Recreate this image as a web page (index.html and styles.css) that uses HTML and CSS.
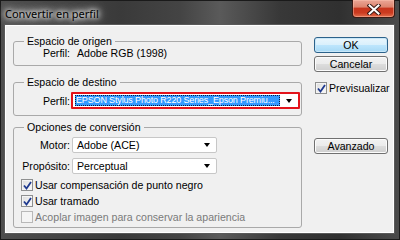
FILE: index.html
```html
<!DOCTYPE html>
<html lang="es">
<head>
<meta charset="utf-8">
<title>Convertir en perfil</title>
<link rel="stylesheet" href="styles.css">
</head>
<body>
<div class="window">
  <div class="titlebar">
    <span class="title">Convertir en perfil</span>
    <button class="close" aria-label="Cerrar">
      <svg width="14" height="11" viewBox="0 0 14 11">
        <path d="M2.5 1.5 L11.5 9.5 M11.5 1.5 L2.5 9.5" stroke="#3a1a14" stroke-width="4" stroke-linecap="square" fill="none"/>
        <path d="M2.5 1.5 L11.5 9.5 M11.5 1.5 L2.5 9.5" stroke="#ffffff" stroke-width="2" stroke-linecap="square" fill="none"/>
      </svg>
    </button>
  </div>
  <div class="client">
    <div class="groups">
      <fieldset class="group g1">
        <legend>Espacio de origen</legend>
        <div class="row">
          <span class="lbl">Perfil:</span>
          <span class="val">Adobe RGB (1998)</span>
        </div>
      </fieldset>
      <fieldset class="group g2">
        <legend>Espacio de destino</legend>
        <div class="row">
          <span class="lbl">Perfil:</span>
          <div class="select focused">
            <span class="sel-text">EPSON Stylus Photo R220 Series_Epson Premiu...</span>
            <span class="arrow"></span>
          </div>
        </div>
      </fieldset>
      <fieldset class="group g3">
        <legend>Opciones de conversión</legend>
        <div class="row">
          <span class="lbl">Motor:</span>
          <div class="select small"><span class="opt">Adobe (ACE)</span><span class="arrow"></span></div>
        </div>
        <div class="row r2">
          <span class="lbl">Propósito:</span>
          <div class="select small"><span class="opt">Perceptual</span><span class="arrow"></span></div>
        </div>
        <label class="check first"><span class="box on"><svg width="9" height="9" viewBox="0 0 9 9"><path d="M1 4.5 L3.5 7.5 L8 1" stroke="#1f3a8f" stroke-width="1.8" fill="none"/></svg></span>Usar compensación de punto negro</label>
        <label class="check"><span class="box on"><svg width="9" height="9" viewBox="0 0 9 9"><path d="M1 4.5 L3.5 7.5 L8 1" stroke="#1f3a8f" stroke-width="1.8" fill="none"/></svg></span>Usar tramado</label>
        <label class="check disabled"><span class="box"></span>Acoplar imagen para conservar la apariencia</label>
      </fieldset>
    </div>
    <div class="side">
      <button class="btn default">OK</button>
      <button class="btn cancel">Cancelar</button>
      <label class="check preview"><span class="box on"><svg width="9" height="9" viewBox="0 0 9 9"><path d="M1 4.5 L3.5 7.5 L8 1" stroke="#1f3a8f" stroke-width="1.8" fill="none"/></svg></span>Previsualizar</label>
      <button class="btn advanced">Avanzado</button>
    </div>
  </div>
</div>
</body>
</html>
```
FILE: styles.css
```css
* { box-sizing: border-box; }
html, body { margin: 0; padding: 0; }
body {
  width: 400px;
  height: 240px;
  overflow: hidden;
  background: #2e2e2e;
  font-family: "Liberation Sans", Arial, sans-serif;
  font-size: 10.6px;
  line-height: 12px;
  color: #000;
}
.window {
  width: 400px;
  height: 240px;
  display: flex;
  flex-direction: column;
  border: 1px solid #1a1a1a;
  background: linear-gradient(to right, #4e4e4e 0%, #3a3a3a 30%, #444 45%, #5a5a5a 55%, #383838 70%, #303030 85%, #4a4a4a 100%);
}
.titlebar {
  height: 23px;
  flex: none;
  display: flex;
  align-items: flex-start;
  justify-content: space-between;
}
.title {
  font-family: "Noto Sans", "Open Sans", sans-serif;
  font-size: 11px;
  line-height: 14px;
  margin: 6px 0 0 2px;
  padding: 0 2px;
  color: #000;
  text-shadow: 0 0 4px #fff, 0 0 7px #fff, 0 0 10px rgba(255,255,255,0.9), 0 0 14px rgba(255,255,255,0.7);
}
.close {
  width: 43px;
  height: 18px;
  margin: -1px 4px 0 0;
  padding: 0;
  border: 1px solid #3b1a14;
  border-top: none;
  border-radius: 0 0 4px 4px;
  background: linear-gradient(#eba696 0%, #de8670 40%, #c8361d 50%, #cc3b20 75%, #e36e4d 100%);
  box-shadow: inset 0 0 0 1px rgba(255,200,180,0.45);
  display: flex;
  align-items: center;
  justify-content: center;
}
.close svg { display: block; margin-top: 1px; }
.client {
  flex: 1;
  margin: 0 4px 5px 3px;
  border: 1px solid #5a5a5a;
  background: #f0f0f0;
  box-shadow: inset 0 0 0 1px #ffffff;
  display: flex;
  padding: 0 6px 0 8px;
}
.groups {
  width: 289px;
  display: flex;
  flex-direction: column;
}
.group {
  margin: 0;
  min-width: 0;
  border: 1px solid #a9a9a9;
  border-radius: 3px;
  padding: 0;
}
.group legend {
  margin-left: 10px;
  padding: 0 3px;
  line-height: 11px;
}
.g1 { margin-top: 11px; padding: 0 0 6px; }
.g2 { margin-top: 11px; padding: 4px 0 6px; }
.g3 { margin-top: 6px; padding: 4px 0 2px; }
.row {
  display: flex;
  align-items: center;
  min-height: 11px;
}
.lbl {
  width: 56px;
  text-align: right;
  flex: none;
}
.val { margin-left: 7px; }
.select {
  display: flex;
  align-items: center;
  background: #fff;
}
.select.focused {
  margin-left: 1px;
  width: 229px;
  height: 17px;
  border: 2px solid #e3131b;
  border-radius: 1px;
  padding: 1px 0 1px 2px;
}
.sel-text {
  flex: none;
  width: 205px;
  height: 11px;
  font-size: 9px;
  letter-spacing: -0.15px;
  line-height: 11px;
  background: #3399ff;
  color: #fff;
  padding: 0 1px;
  outline: 1px dotted #0a1a40;
  outline-offset: -1px;
  white-space: nowrap;
}
.select.small {
  margin-left: 2px;
  width: 145px;
  height: 16px;
  border: 1px solid #c7c7c7;
  border-radius: 2px;
  padding-left: 4px;
}
.r2 { margin-top: 5px; }
.arrow {
  flex: none;
  margin-left: auto;
  margin-right: 6px;
  width: 0;
  height: 0;
  border-left: 3.5px solid transparent;
  border-right: 3.5px solid transparent;
  border-top: 4px solid #000;
}
.check {
  display: flex;
  align-items: center;
  height: 16px;
  padding-left: 7px;
  white-space: nowrap;
}
.check.first { margin-top: 3px; }
.box {
  width: 12px;
  height: 12px;
  border: 1px solid #8e8f8f;
  background: linear-gradient(135deg, #dcdcdc, #fcfcfc);
  box-shadow: inset 0 0 0 1px #f4f4f4;
  margin-right: 2px;
  display: flex;
  align-items: center;
  justify-content: center;
  flex: none;
}
.box svg { display: block; }
.check.disabled { color: #7a7a7a; }
.check.disabled .box {
  border-color: #b8b8b8;
  background: #f4f4f4;
}
.side {
  margin-left: 12px;
  width: 74px;
  display: flex;
  flex-direction: column;
  padding-top: 12px;
}
.btn {
  font-family: inherit;
  font-size: 10.6px;
  height: 16px;
  width: 74px;
  padding: 0;
  border: 1px solid #707070;
  border-radius: 3px;
  background: linear-gradient(#f2f2f2 0%, #ebebeb 50%, #dddddd 50%, #cfcfcf 100%);
  box-shadow: inset 0 0 0 1px #fcfcfc;
  color: #000;
  line-height: 12px;
}
.btn.default {
  border-color: #2c628b;
  background: linear-gradient(#eaf6fd 0%, #d9f0fc 50%, #bee6fd 50%, #a7d9f5 100%);
  box-shadow: inset 0 0 0 1px #c9e7f8;
}
.btn.cancel { margin-top: 3px; }
.check.preview { padding-left: 1px; margin-top: 8px; }
.btn.advanced { margin-top: 42px; }
```
